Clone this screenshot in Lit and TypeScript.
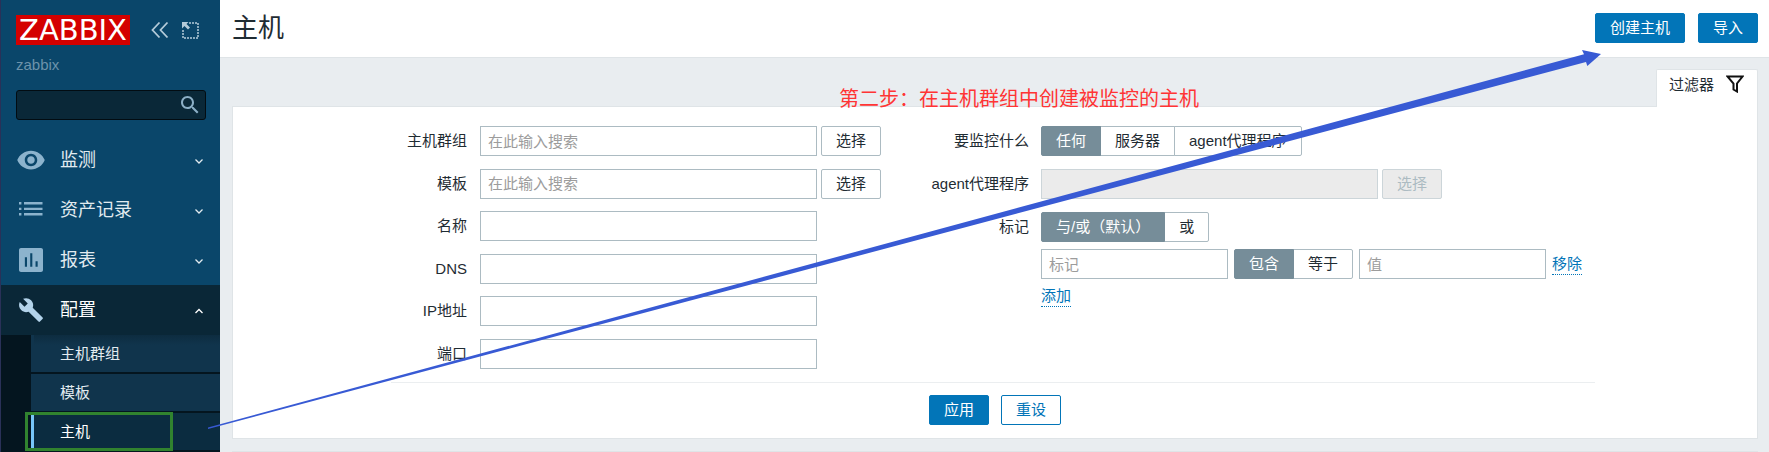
import { LitElement, html, css, svg, nothing } from "lit";
import { customElement, state } from "lit/decorators.js";

const icons: Record<string, unknown> = {
  eye: svg`<svg class="ico" width="30" height="30" viewBox="0 0 24 24"><path fill="currentColor" d="M12 4.5C7 4.5 2.73 7.61 1 12c1.73 4.39 6 7.5 11 7.5s9.27-3.11 11-7.5c-1.73-4.39-6-7.5-11-7.5zM12 17c-2.76 0-5-2.24-5-5s2.24-5 5-5 5 2.240 5 5-2.240 5-5 5zm0-8c-1.660 0-3 1.340-3 3s1.340 3 3 3 3-1.340 3-3-1.340-3-3-3z"/></svg>`,
  list: svg`<svg class="ico" width="24" height="24" viewBox="0 0 24 24"><path fill="currentColor" d="M0 4h2.400v2.400H0zM5 4h18.500v2.400H5zM0 9.700h2.400v2.400H0zM5 9.700h18.500v2.400H5zM0 15h2.400v2.400H0zM5 15h18.500v2.400H5z"/></svg>`,
  chart: svg`<svg class="ico" width="32" height="32" viewBox="0 0 24 24"><path fill="currentColor" d="M19.500 3h-15C3.700 3 3 3.700 3 4.500v15c0 .8.7 1.500 1.500 1.500h15c.8 0 1.500-.7 1.500-1.500v-15c0-.8-.7-1.500-1.500-1.500zM9 17H7.400v-7H9zm4 0h-1.600V7H13zm4 0h-1.600v-4H17z"/></svg>`,
  wrench: svg`<svg class="ico" width="26" height="26" viewBox="0 0 24 24"><path fill="currentColor" d="M22.700 19l-9.100-9.100c.9-2.300.4-5-1.500-6.900-2-2-5-2.400-7.400-1.300L9 6 6 9 1.600 4.700C.4 7.100.9 10.100 2.900 12.100c1.900 1.900 4.600 2.400 6.900 1.500l9.100 9.100c.4.4 1 .4 1.400 0l2.300-2.300c.5-.4.5-1.100.1-1.400z"/></svg>`,
};

const menu = [
  { icon: "eye", text: "监测" },
  { icon: "list", text: "资产记录" },
  { icon: "chart", text: "报表" },
  { icon: "wrench", text: "配置", open: true },
];

@customElement("side-nav")
export class SideNav extends LitElement {
  static styles = css`
    :host { display: block; box-sizing: border-box; background: #0a466a; border-left: 1px solid #2a3158; }
    * { box-sizing: border-box; }
    a { text-decoration: none; color: inherit; }
    button { border: 0; padding: 0; background: none; color: inherit; font: inherit; display: block; cursor: pointer; }
    svg { display: block; }
    .top { display: flex; align-items: center; padding: 15px 21px 0 15px; }
    .logo { width: 114px; height: 30px; line-height: 30px; background: #d40000; color: #fff; text-align: center; font-family: "DejaVu Sans", sans-serif; font-size: 29px; }
    .tools { display: flex; gap: 12px; margin-left: auto; color: #b4cbd9; }
    .server { padding: 10px 15px 0; line-height: 20px; color: #6d93ab; }
    .search { display: flex; align-items: center; height: 30px; margin: 15px 14px 15px 15px; background: #0a2838; border: 1px solid #020c12; border-radius: 3px; padding-right: 3px; color: #8cafc6; }
    .search input { flex: 1; min-width: 0; height: 28px; border: 0; background: none; color: #fff; font: inherit; outline: 0; padding: 0 8px; }
    .item { display: flex; align-items: center; height: 50px; padding: 0 17px 0 14px; font-size: 18px; color: #e2ebf0; }
    .pic { width: 32px; display: flex; justify-content: center; color: #8cb3cd; }
    .name { flex: 1; padding-left: 13px; }
    .open { background: #0a2737; color: #fff; }
    .open .pic { color: #b3d3ea; }
    .sub { display: grid; gap: 2px; margin: 0; padding: 0 0 2px 30px; list-style: none; background: #04151f; }
    .sub a { display: block; height: 37px; line-height: 37px; padding-left: 26px; border-left: 3px solid #10344c; background: #10344c; color: #e2ebf0; }
    .first a { background: linear-gradient(#0d2c40, #10344c 10px); }
    .sub .current { background: #0b2c40; border-left-color: #78c6f8; color: #fff; }
  `;
  render() {
    return html`
      <div class="top">
        <a href="#" class="logo">ZABBIX</a>
        <div class="tools">
          <button aria-label="收起侧边栏">
            <svg width="18" height="18" viewBox="0 0 18 18" fill="none" stroke="currentColor" stroke-width="1.800"><path d="M8.500 1.500L1.500 9L8.500 16.500M16.500 1.500L9.500 9L16.500 16.500"/></svg>
          </button>
          <button aria-label="隐藏侧边栏">
            <svg width="18" height="18" viewBox="0 0 18 18"><path d="M8 2h9v15H2V8" fill="none" stroke="currentColor" stroke-width="1.500" stroke-dasharray="2 1"/><path d="M1 1h6.500L5.500 3L9 6.500L7 8.500L3.500 5L1 7.500z" fill="currentColor"/></svg>
          </button>
        </div>
      </div>
      <div class="server">zabbix</div>
      <form class="search" role="search">
        <input type="text" aria-label="搜索" />
        <button type="button" aria-label="搜索">
          <svg width="24" height="24" viewBox="0 0 24 24"><path fill="currentColor" d="M15.500 14h-.79l-.28-.27C15.410 12.590 16 11.110 16 9.500 16 5.910 13.090 3 9.500 3S3 5.910 3 9.500 5.910 16 9.500 16c1.610 0 3.090-.59 4.230-1.570l.27.28v.79l5 4.990L20.490 19l-4.990-5zm-6 0C7.010 14 5 11.990 5 9.500S7.010 5 9.500 5 14 7.010 14 9.500 11.990 14 9.500 14z"/></svg>
        </button>
      </form>
      <nav>
        ${menu.map((m) => html`
          <a href="#" class="item ${m.open ? "open" : ""}">
            <span class="pic">${icons[m.icon]}</span>
            <span class="name">${m.text}</span>
            <svg width="8" height="8" viewBox="0 0 8 8" fill="none" stroke="currentColor" stroke-width="1.300"><path d=${m.open ? "M.5 7L4 3.500L7.500 7" : "M.5 3.500L4 7L7.500 3.500"} /></svg>
          </a>`)}
        <ul class="sub">
          <li class="first"><a href="#">主机群组</a></li>
          <li><a href="#">模板</a></li>
          <li><a href="#" class="current">主机</a></li>
        </ul>
      </nav>
    `;
  }
}

@customElement("app-root")
export class AppRoot extends LitElement {
  static styles = css`
    :host { display: flex; position: relative; min-height: 100vh; overflow: hidden; background: #e9edf0; color: #1f2c33; font: 15px/20px "Liberation Sans", "Noto Sans CJK SC", sans-serif; }
    * { box-sizing: border-box; }
    side-nav { flex: 0 0 220px; min-width: 0; }
    main { flex: 1; min-width: 0; }
    header { display: flex; align-items: center; height: 58px; padding: 0 11px 2px 12px; background: #fff; border-bottom: 1px solid #dfe4e7; }
    h1 { flex: 1; margin: 0; font-size: 26px; line-height: 32px; font-weight: 400; }
    .actions { display: flex; gap: 13px; }
    button { height: 30px; padding: 0 14px; border: 1px solid #acbbc2; border-radius: 2px; background: #fff; color: inherit; font: inherit; line-height: 20px; white-space: nowrap; cursor: pointer; }
    .primary { background: #0275b8; border-color: #0275b8; color: #fff; }
    .outline { border-color: #0275b8; color: #0275b8; }
    button:disabled { background: #ebebeb; border-color: #ccd5d9; color: #acbbc2; }
    .content { padding: 11px 11px 0 12px; }
    .tabs { display: flex; justify-content: flex-end; }
    .tab { display: flex; align-items: flex-start; gap: 12px; height: 38px; margin-bottom: -1px; padding: 5px 13px 0 12px; background: #fff; border: 1px solid #dfe4e7; border-bottom: 0; border-radius: 2px 2px 0 0; color: inherit; text-decoration: none; position: relative; }
    .panel { background: #fff; border: 1px solid #dfe4e7; padding-bottom: 13px; }
    .cols { display: grid; grid-template-columns: 490px 1fr; margin: 0 162px 0 158px; padding: 19px 0 13px; border-bottom: 1px solid #ebeef0; }
    .left { display: grid; min-height: 243px; align-content: space-between; }
    .right { display: grid; gap: 13px; align-content: start; }
    .row { display: grid; grid-template-columns: 76px 1fr; gap: 13px; }
    .right .row { grid-template-columns: 148px 1fr; gap: 12px; }
    .cap { line-height: 30px; text-align: right; white-space: nowrap; }
    .field { display: flex; gap: 4px; }
    .text { width: 337px; height: 30px; padding: 0 7px; border: 1px solid #acbbc2; border-radius: 0; background: #fff; color: inherit; font: inherit; outline: 0; }
    .text:disabled { background: #ebebeb; border-color: #ccd5d9; }
    .text::placeholder { color: #9c9c9c; opacity: 1; }
    .tags { display: grid; gap: 7px; justify-items: start; }
    .tagrow { display: flex; align-items: center; gap: 6px; }
    .tagrow .text { width: 187px; }
    .seg { display: flex; }
    .seg input { position: absolute; opacity: 0; pointer-events: none; }
    .seg label { height: 30px; line-height: 28px; padding: 0 14px; border: 1px solid #acbbc2; background: #fff; white-space: nowrap; cursor: pointer; }
    .seg label + input + label { margin-left: -1px; }
    .seg label:first-of-type { border-radius: 2px 0 0 2px; }
    .seg label:last-of-type { border-radius: 0 2px 2px 0; }
    .seg input:checked + label { background: #768d99; border-color: #768d99; color: #fff; position: relative; }
    .link { color: #0275b8; text-decoration: none; border-bottom: 1px dotted #0275b8; line-height: 20px; white-space: nowrap; }
    .foot { display: flex; justify-content: center; gap: 12px; padding-top: 12px; }
    .results { margin-top: 12px; border-top: 1px solid #dfe4e7; }
    .note { position: absolute; left: 839px; top: 86px; font-size: 20px; line-height: 26px; color: #ff3434; white-space: nowrap; }
    .frame { position: absolute; left: 25px; top: 412px; width: 148px; height: 39px; border: 3px solid #31832f; }
    .arrow { position: absolute; left: 208px; top: 48px; pointer-events: none; }
  `;

  @state() private sel: Record<string, number> = { proxy: 0, evaltype: 0, op: 0 };

  private segment(name: string, caption: string, options: string[]) {
    return html`<div class="seg" role="radiogroup" aria-label=${caption}>
      ${options.map((o, i) => html`<input type="radio" id="${name}${i}" name=${name} .checked=${this.sel[name] === i}
        @change=${() => (this.sel = { ...this.sel, [name]: i })} /><label for="${name}${i}">${o}</label>`)}
    </div>`;
  }

  private textRow(id: string, caption: string, pick = false) {
    return html`<div class="row">
      <label class="cap" for=${id}>${caption}</label>
      <div class="field">
        <input class="text" type="text" id=${id} placeholder=${pick ? "在此输入搜索" : ""} />
        ${pick ? html`<button type="button">选择</button>` : nothing}
      </div>
    </div>`;
  }

  render() {
    return html`
      <side-nav></side-nav>
      <main>
        <header>
          <h1>主机</h1>
          <div class="actions">
            <button class="primary">创建主机</button>
            <button class="primary">导入</button>
          </div>
        </header>
        <div class="content">
          <div class="tabs">
            <a href="#" class="tab">过滤器
              <svg width="18" height="18" viewBox="0 0 18 18" fill="none" stroke="#111" stroke-width="2"><path d="M1.500 1.500H16.500L11 8.500V16.500L7.500 14.500V8.500z"/></svg>
            </a>
          </div>
          <form class="panel">
            <div class="cols">
              <div class="left">
                ${this.textRow("groups", "主机群组", true)}
                ${this.textRow("templates", "模板", true)}
                ${this.textRow("name", "名称")}
                ${this.textRow("dns", "DNS")}
                ${this.textRow("ip", "IP地址")}
                ${this.textRow("port", "端口")}
              </div>
              <div class="right">
                <div class="row">
                  <span class="cap">要监控什么</span>
                  ${this.segment("proxy", "要监控什么", ["任何", "服务器", "agent代理程序"])}
                </div>
                <div class="row">
                  <label class="cap" for="agent">agent代理程序</label>
                  <div class="field">
                    <input class="text" type="text" id="agent" disabled />
                    <button type="button" disabled>选择</button>
                  </div>
                </div>
                <div class="row">
                  <span class="cap">标记</span>
                  <div class="tags">
                    ${this.segment("evaltype", "标记", ["与/或（默认）", "或"])}
                    <div class="tagrow">
                      <input class="text" type="text" placeholder="标记" aria-label="标记" />
                      ${this.segment("op", "运算符", ["包含", "等于"])}
                      <input class="text" type="text" placeholder="值" aria-label="值" />
                      <a href="#" class="link">移除</a>
                    </div>
                    <a href="#" class="link">添加</a>
                  </div>
                </div>
              </div>
            </div>
            <div class="foot">
              <button type="button" class="primary">应用</button>
              <button type="button" class="outline">重设</button>
            </div>
          </form>
          <div class="results"></div>
        </div>
      </main>
      <div class="note">第二步：在主机群组中创建被监控的主机</div>
      <div class="frame"></div>
      <svg class="arrow" width="1394" height="382" viewBox="208 48 1394 382"><path fill="#385ad4" d="M208 427.500L1584 54.300L1582 50L1601 54L1587.300 66L1586 62L208 429z"/></svg>
    `;
  }
}
